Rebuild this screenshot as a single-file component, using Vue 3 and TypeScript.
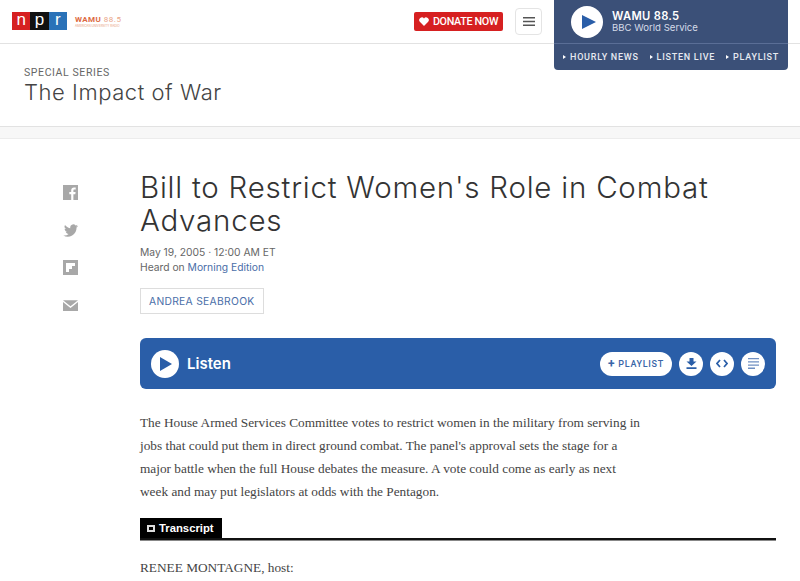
<script setup lang="ts">
const shareIcons = [
  { name: 'facebook', path: 'M0 0h15v15h-4.6V9.3h1.9l.3-2.2h-2.2V5.7c0-.7.2-1.1 1.1-1.1h1.2v-2a14 14 0 0 0-1.7-.1c-1.700 0-2.800 1-2.800 2.900v1.700H6.300v2.200h1.900V15H0z' },
  { name: 'twitter', path: 'M15 2.900c-.5.2-1.100.4-1.800.5.600-.4 1.100-1 1.400-1.700-.6.300-1.300.6-2 .7a3.100 3.100 0 0 0-5.300 2.800C5.800 5.100 3.500 3.900 2 2a3.100 3.100 0 0 0 1 4.100c-.5 0-1-.2-1.400-.4 0 1.500 1.100 2.800 2.500 3.100-.5.100-.9.100-1.400 0 .4 1.200 1.500 2.100 2.900 2.100A6.200 6.200 0 0 1 0 12.200 8.700 8.700 0 0 0 13.500 4.500c.6-.4 1.100-1 1.500-1.600z' },
  { name: 'flipboard', path: 'M0 0h15v15H0zM3 3v9h3V9h3V6h3V3z' },
  { name: 'email', path: 'M0 2.200h15L7.500 8.200zM0 3.900l7.500 6 7.500-6v9H0z' },
]
const stationLinks = ['HOURLY NEWS', 'LISTEN LIVE', 'PLAYLIST']
</script>

<template>
  <div class="page">
    <header class="topbar">
      <div class="logos">
        <div class="npr"><span class="n">n</span><span class="p">p</span><span class="r">r</span></div>
        <div class="wamu">
          <div class="wamu-name"><b>WAMU</b> 88.5</div>
          <div class="wamu-sub">AMERICAN UNIVERSITY RADIO</div>
        </div>
      </div>
      <div class="actions">
        <a class="donate">
          <svg width="10" height="9" viewBox="0 0 10 9"><path fill="#fff" d="M5 9 .8 4.800A2.500 2.500 0 0 1 5 1.500a2.500 2.500 0 0 1 4.200 3.300z" /></svg>
          DONATE NOW
        </a>
        <button class="menu" type="button" aria-label="Menu">
          <svg width="12" height="9" viewBox="0 0 12 9"><path fill="#555" d="M0 0h12v1.600H0zM0 3.700h12v1.600H0zM0 7.400h12V9H0z" /></svg>
        </button>
      </div>
    </header>

    <aside class="station">
      <div class="station-now">
        <span class="station-play">
          <svg width="14" height="14" viewBox="0 0 14 14"><path fill="#2a5ea8" d="M0 0l14 7-14 7z" /></svg>
        </span>
        <div>
          <div class="station-name">WAMU 88.5</div>
          <div class="station-show">BBC World Service</div>
        </div>
      </div>
      <div class="station-links">
        <span v-for="link in stationLinks" :key="link" class="station-link">
          <i class="tri"></i>{{ link }}
        </span>
      </div>
    </aside>

    <section class="series">
      <div class="series-label">SPECIAL SERIES</div>
      <div class="series-title">The Impact of War</div>
    </section>
    <div class="strip"></div>

    <main class="story">
      <ul class="share">
        <li v-for="icon in shareIcons" :key="icon.name">
          <svg width="15" height="15" viewBox="0 0 15 15"><path fill="#a8a8a8" fill-rule="evenodd" :d="icon.path" /></svg>
        </li>
      </ul>
      <article class="content">
        <h1>Bill to Restrict Women's Role in Combat Advances</h1>
        <div class="dateline">May 19, 2005 · 12:00 AM ET</div>
        <div class="heard">Heard on <a>Morning Edition</a></div>
        <div class="byline">ANDREA SEABROOK</div>

        <div class="listen">
          <span class="listen-play">
            <svg width="12" height="14" viewBox="0 0 12 14"><path fill="#2a5ea8" d="M0 0l12 7-12 7z" /></svg>
          </span>
          <span class="listen-label">Listen</span>
          <div class="listen-tools">
            <span class="pill"><b>+</b> PLAYLIST</span>
            <span class="round">
              <svg width="11" height="11" viewBox="0 0 11 11"><path fill="#2a5ea8" d="M3.500 0h4v3.500h3L5.500 8 .5 3.500h3zM.5 9.300h10V11H.5z" /></svg>
            </span>
            <span class="round">
              <svg width="12" height="9" viewBox="0 0 12 9"><path fill="none" stroke="#2a5ea8" stroke-width="1.700" d="M4 1 1 4.500 4 8M8 1l3 3.500L8 8" /></svg>
            </span>
            <span class="round">
              <svg width="11" height="11" viewBox="0 0 11 11"><path fill="#6f8fc2" d="M0 0h11v1.300H0zM0 3.200h11v1.300H0zM0 6.400h11v1.300H0zM0 9.600h7V11H0z" /></svg>
            </span>
          </div>
        </div>

        <p class="summary">The House Armed Services Committee votes to restrict women in the military from serving in jobs that could put them in direct ground combat. The panel's approval sets the stage for a major battle when the full House debates the measure. A vote could come as early as next week and may put legislators at odds with the Pentagon.</p>

        <div class="transcript-head">
          <span class="transcript-tab"><i class="doc"></i>Transcript</span>
        </div>
        <p class="transcript-line">RENEE MONTAGNE, host:</p>
      </article>
    </main>
  </div>
</template>

<style>
html,
body {
  margin: 0;
  background: #fff;
  overflow: hidden;
}
</style>

<style scoped>
.page {
  position: relative;
  width: 800px;
  height: 581px;
  overflow: hidden;
  font-family: Inter, "Liberation Sans", sans-serif;
  color: #333;
}

.topbar {
  display: flex;
  justify-content: space-between;
  align-items: flex-start;
  height: 43px;
  border-bottom: 1px solid #e2e2e2;
}

.logos {
  display: flex;
  align-items: center;
  gap: 8px;
  padding: 12px 0 0 12px;
}

.npr {
  display: flex;
  height: 18px;
  font-family: "Liberation Sans", sans-serif;
  font-size: 17px;
  line-height: 16px;
  color: #fff;
}

.npr span {
  width: 18.300px;
  text-align: center;
}

.n { background: #d62021; }
.p { background: #111; }
.r { background: #2a72b8; }

.wamu-name {
  font-family: Roboto, sans-serif;
  font-size: 8px;
  line-height: 9px;
  letter-spacing: 0.5px;
  color: #eaa587;
}

.wamu-name b {
  color: #dd6a3f;
}

.wamu-sub {
  font-size: 3px;
  line-height: 4px;
  color: #e9a080;
  white-space: nowrap;
}

.actions {
  display: flex;
  align-items: center;
  gap: 12px;
  padding: 8px 258px 0 0;
}

.donate {
  display: flex;
  align-items: center;
  justify-content: center;
  gap: 4px;
  width: 89px;
  height: 19px;
  background: #d62021;
  border-radius: 2px;
  color: #fff;
  font-family: Roboto, sans-serif;
  font-size: 10.800px;
  font-weight: 500;
  letter-spacing: -0.35px;
  white-space: nowrap;
}

.menu {
  display: flex;
  align-items: center;
  justify-content: center;
  width: 27px;
  height: 27px;
  padding: 0;
  background: #fff;
  border: 1px solid #e4e4e4;
  border-radius: 4px;
}

.station {
  position: absolute;
  top: 0;
  left: 554px;
  width: 234px;
  height: 70px;
  background: #3b5078;
  border-radius: 0 0 4px 4px;
  color: #fff;
}

.station-now {
  display: flex;
  align-items: center;
  gap: 9px;
  height: 43px;
  padding-left: 17px;
  border-bottom: 1px solid #5a6e96;
}

.station-play {
  display: flex;
  align-items: center;
  justify-content: center;
  width: 32px;
  height: 32px;
  padding-left: 3px;
  box-sizing: border-box;
  background: #fff;
  border-radius: 50%;
}

.station-name {
  font-size: 11.200px;
  font-weight: 600;
  line-height: 12px;
  letter-spacing: 0.3px;
}

.station-show {
  font-size: 9.600px;
  line-height: 11px;
  color: #d5dbe8;
}

.station-links {
  display: flex;
  justify-content: space-between;
  padding: 8px 9px 0;
}

.station-link {
  display: flex;
  align-items: center;
  font-family: Roboto, sans-serif;
  font-size: 9px;
  font-weight: 500;
  letter-spacing: 0.75px;
  color: #e6e9f0;
}

.tri {
  width: 0;
  height: 0;
  margin-right: 4px;
  border-left: 3px solid #fff;
  border-top: 2px solid transparent;
  border-bottom: 2px solid transparent;
}

.series {
  height: 82px;
  padding: 22px 24px 0;
  box-sizing: border-box;
}

.series-label {
  font-family: Roboto, sans-serif;
  font-size: 10.500px;
  line-height: 13px;
  letter-spacing: 0.6px;
  color: #666;
}

.series-title {
  font-size: 22px;
  font-weight: 300;
  line-height: 26px;
  letter-spacing: 0.55px;
  color: #444;
}

.strip {
  height: 11px;
  background: #f7f7f7;
  border-top: 1px solid #e2e2e2;
  border-bottom: 1px solid #ececec;
}

.story {
  display: flex;
  padding: 0 24px 0 63px;
}

.share {
  width: 77px;
  flex: none;
  margin: 0;
  padding: 45px 0 0;
  list-style: none;
}

.share li {
  height: 37.500px;
}

.content {
  flex: 1;
  min-width: 0;
}

h1 {
  margin: 32px 0 0;
  font-size: 29.500px;
  font-weight: 300;
  line-height: 33px;
  letter-spacing: 0.77px;
  color: #333;
}

.dateline,
.heard {
  font-size: 10.300px;
  line-height: 15px;
  color: #666;
}

.dateline {
  margin-top: 8px;
}

.heard a {
  color: #4a6ea8;
}

.byline {
  width: fit-content;
  margin-top: 13px;
  padding: 0 8px;
  height: 24px;
  line-height: 24px;
  border: 1px solid #ddd;
  font-size: 10.300px;
  letter-spacing: 0.3px;
  color: #4a6ea8;
}

.listen {
  display: flex;
  align-items: center;
  height: 51px;
  margin-top: 24px;
  padding: 0 11px;
  background: #2a5ea8;
  border-radius: 6px;
}

.listen-play {
  display: flex;
  align-items: center;
  justify-content: center;
  width: 28px;
  height: 28px;
  padding-left: 2px;
  box-sizing: border-box;
  background: #fff;
  border-radius: 50%;
}

.listen-label {
  margin-left: 8px;
  font-size: 15px;
  font-weight: 600;
  color: #fff;
}

.listen-tools {
  display: flex;
  align-items: center;
  gap: 7px;
  margin-left: auto;
}

.pill {
  display: flex;
  align-items: center;
  justify-content: center;
  gap: 3px;
  width: 72px;
  height: 24px;
  background: #fff;
  border-radius: 12px;
  font-family: Roboto, sans-serif;
  font-size: 9px;
  font-weight: 500;
  letter-spacing: 0.7px;
  color: #3a66a8;
}

.pill b {
  font-size: 12px;
}

.round {
  display: flex;
  align-items: center;
  justify-content: center;
  width: 24px;
  height: 24px;
  background: #fff;
  border-radius: 50%;
}

.summary {
  margin: 22px 0 0;
  width: 505px;
  font-family: "Liberation Serif", serif;
  font-size: 13.300px;
  line-height: 23px;
  color: #444;
}

.transcript-head {
  margin-top: 15px;
  border-bottom: 2px solid #111;
  box-shadow: 0 1px 0 #888;
}

.transcript-tab {
  display: flex;
  align-items: center;
  gap: 4px;
  width: 82px;
  height: 20px;
  padding-left: 7px;
  box-sizing: border-box;
  background: #000;
  color: #fff;
  font-family: "Liberation Sans", sans-serif;
  font-size: 11.300px;
  font-weight: 700;
}

.doc {
  width: 4px;
  height: 3px;
  border: 2px solid #ddd;
}

.transcript-line {
  margin: 16px 0 0;
  font-family: "Liberation Serif", serif;
  font-size: 13.300px;
  line-height: 23px;
  color: #444;
}
</style>
